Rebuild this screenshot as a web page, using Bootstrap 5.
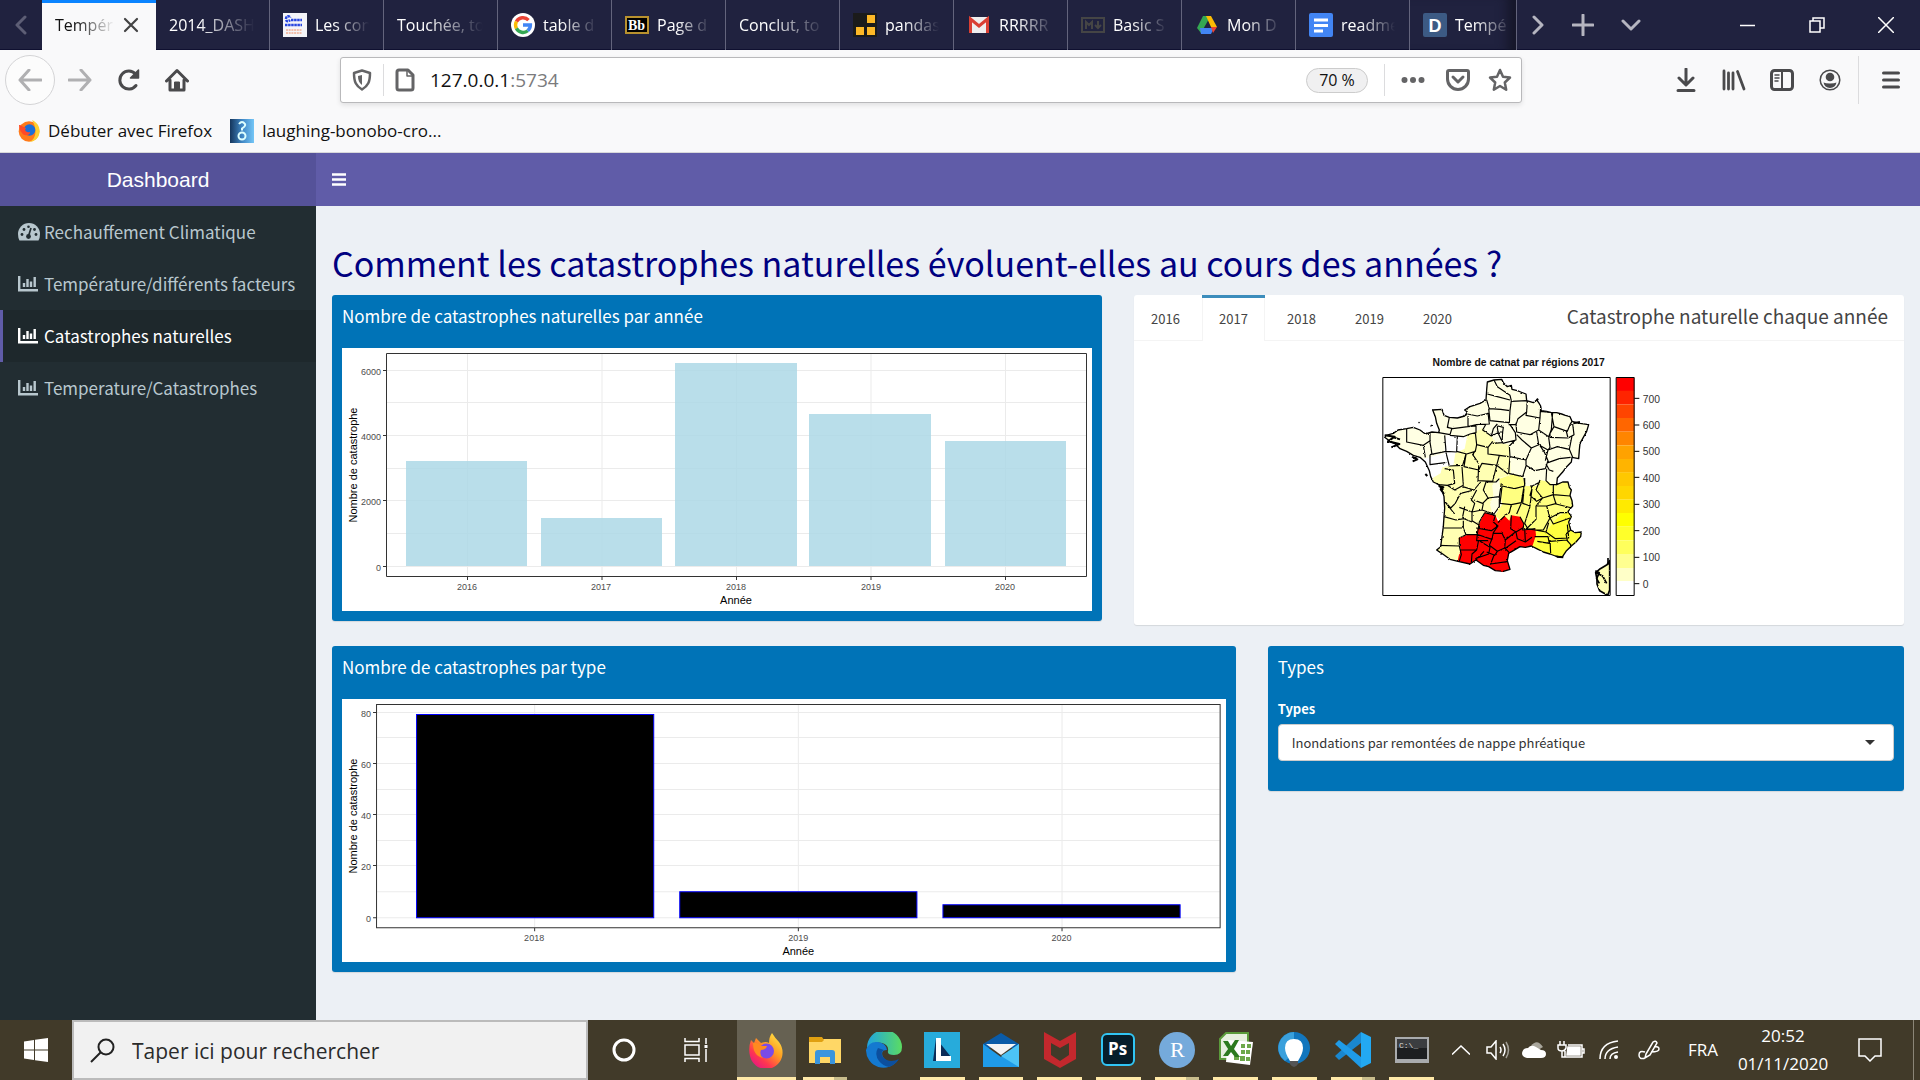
<!DOCTYPE html>
<html lang="fr">
<head>
<meta charset="utf-8">
<meta name="viewport" content="width=device-width, initial-scale=1">
<title>Températures et catastrophes</title>
<link href="https://cdn.jsdelivr.net/npm/bootstrap@5.3.0/dist/css/bootstrap.min.css" rel="stylesheet">
<style>
:root{--ui:"Open Sans","Noto Sans",sans-serif;--page:"Noto Sans CJK SC","Open Sans",sans-serif;--plot:"Liberation Sans",Arial,sans-serif}
body{font-family:var(--ui);font-size:17px;line-height:24px;color:#111;background:#ecf0f5;overflow:hidden}
button{border:0;background:none;padding:0;color:inherit;font:inherit}
a{text-decoration:none;color:inherit}
svg{display:block;flex:none}
.ln{fill:none;stroke:currentColor;stroke-width:3;stroke-linecap:round;stroke-linejoin:round}
.thin{fill:none;stroke:currentColor;stroke-width:1.5}
.slot{display:flex;align-items:center;justify-content:center;flex:none}
/* tabs */
.tabstrip{height:50px;background:#20223f;color:#fff;box-shadow:inset 0 -1px #0f1030;font-size:16px}
.w42{width:42px}.w48{width:48px}.w50{width:50px}.w70{width:69px}
.btab{width:114px;height:50px;padding:0 14px 0 13px;gap:8px;border-right:1px solid #63647c;min-width:0;display:flex;align-items:center;flex:0 1 114px}
.btab.current{background:#f9f9fa;color:#111;border-top:3px solid #0a84ff;border-right:0;padding:0 17px 3px 13px}
.btab.last-tab{flex-basis:107px;padding-right:5px;box-shadow:inset -16px 0 12px -8px #151628}
.fade-txt{flex:1;overflow:hidden;white-space:nowrap;min-width:0;-webkit-mask-image:linear-gradient(90deg,#000 35%,transparent 100%);mask-image:linear-gradient(90deg,#000 35%,transparent 100%)}
/* toolbar */
.toolbar{background:#f9f9fa;height:60px;color:#4a4a4c;padding:0 5px}
.backring{width:50px;height:50px;border:1px solid #d4d4d6;border-radius:50%;color:#b0b0b2;background:#fcfcfc}
.urlbar{height:46px;margin:0 140px 0 139px;background:#fff;border:1px solid #b9b9bb;border-radius:3px;box-shadow:0 2px 5px rgba(0,0,0,.1);color:#646466}
.addr{font-size:19px;color:#111;white-space:nowrap}
.addr span{color:#7b7b7d}
.vr1{width:1px;align-self:stretch;background:#dcdcde;margin:6px 0}
.zoompill{height:25px;border:1px solid #ccc;border-radius:13px;background:#f0f0f1;color:#111;font-size:16px;line-height:22px;width:62px}
.bookmarks{height:43px;background:#f9f9fa;border-bottom:1px solid #d8d8da;padding:0 18px 0;gap:18px}
.bookmarks a{gap:8px;display:flex;align-items:center}
/* dashboard */
.dash{flex:1;min-height:0;display:grid;grid-template-columns:316px 1fr;grid-template-rows:53px 1fr;font-family:var(--page)}
.brand{background:#555299;color:#fff;font:21px/53px var(--plot);text-align:center}
.topnav{background:#605ca8;color:#fff}
.side{background:#222d32;color:#b8c7ce;font-size:17px}
.side a{height:52px;padding-left:15px;border-left:3px solid transparent;gap:4px;display:flex;align-items:center}
.side a svg + span{margin-left:2px}
.side a.on{background:#1e282c;color:#fff;border-color:#605ca8}
.headline{font-size:34px;line-height:42px;font-weight:400;color:navy;margin:36px 16px 11px}
.panel{border-radius:3px;box-shadow:0 1px 1px rgba(0,0,0,.1)}
.blue{background:#0073b7;color:#fff;padding:10px}
.blue h2{font-size:17px;line-height:22px;font-weight:400;margin:0 0 21px}
.blue svg{width:100%;height:auto;background:#fff}
.plots text{font-family:var(--plot);font-size:9px;fill:#4d4d4d}
.plots .ttl{font-size:11px;fill:#000}
.row-gap{margin-bottom:21px}
.yeartabs{height:46px;border-bottom:1px solid #f4f4f4;font-size:13px;color:#444}
.yeartabs button{width:63px;margin-right:5px;height:46px;border-top:3px solid transparent}
.yeartabs button.on{border-top-color:#3c8dbc;background:#fff;box-shadow:inset 1px 0 #f4f4f4,inset -1px 0 #f4f4f4}
.yeartabs h2{font-size:19px;line-height:24px;font-weight:400;margin:0 16px 0 auto;padding-bottom:4px}
.mapbox{padding:9px 0 15px}
.mapbox svg{margin:auto}
.mapbox text{font-family:var(--plot);font-size:31px;fill:#333}
.types label{font-size:13px;line-height:20px;font-weight:700;display:block;margin:1px 0 5px}
.types select{height:37px;font-size:13px;color:#333;border:1px solid #ccc;border-radius:4px;padding:0 40px 0 13px;background:#fff url("data:image/svg+xml,%3Csvg xmlns='http://www.w3.org/2000/svg' width='10' height='5'%3E%3Cpath d='M0 0h10L5 5z' fill='%23333'/%3E%3C/svg%3E") no-repeat right 18px center}
.types{padding-bottom:30px}
/* taskbar */
.taskbar{height:60px;background:#413a29;color:#fff;flex:none}
.w72{width:72px}
.search{width:516px;height:60px;border:2px solid #bbb;background:#f1f1f1;color:#222;gap:17px;padding-left:16px}
.search input{border:0;outline:0;background:none;font-size:21px;width:400px;color:#222;padding:2px 0 0}
.search input::placeholder{color:#2b2b2b;opacity:1}
.apps{width:704px;margin-left:5px}
.apps button{flex:1;height:60px;display:flex;align-items:center;justify-content:center;position:relative}
.apps .run::after{content:"";position:absolute;left:7px;right:7px;bottom:0;height:3px;background:#ffe9a8}
.apps .multi::after{background:linear-gradient(90deg,#ffe9a8 70%,#c9bd8c 70%)}
.apps .front{background:#666152}.apps .front::after{left:0;right:0}
.tray{font-size:17px}
.clock{font-size:17px;line-height:28px;width:124px;text-align:center}
.edgeline{border-left:1px solid #8b8677;width:7px;height:60px;margin-left:18px}
.w36{width:36px}
</style>
<script src="https://cdn.jsdelivr.net/npm/bootstrap@5.3.0/dist/js/bootstrap.bundle.min.js"></script>
</head>
<body class="d-flex flex-column vh-100">

<nav class="tabstrip d-flex align-items-center" aria-label="Onglets">
  <button class="slot w42" aria-label="Défiler à gauche"><svg width="12" height="20" viewBox="0 0 12 20" class="ln" color="#5d5e75"><path d="M10 2 2 10l8 8"/></svg></button>
  <a href="#" class="btab current"><span class="fade-txt">Tempér</span><svg width="16" height="16" viewBox="0 0 16 16" class="ln" color="#444"><path d="M2 2l12 12M14 2 2 14" stroke-width="2.200"/></svg></a>
  <a href="#" class="btab"><span class="fade-txt">2014_DASH</span></a>
  <a href="#" class="btab"><svg width="24" height="24" viewBox="0 0 24 24"><path fill="#f4f4f8" d="M0 0h24v24H0z"/><path d="M3 6c0-4 4-3 4-1M3 7c1 2 3 1 4 0M8 7h11M2 12h17" stroke="#2846e0" stroke-width="2.5" stroke-dasharray="2.5 .6" fill="none"/><path d="M3 17h16M3 20h16" stroke="#f08a60" stroke-dasharray="2 .7"/></svg><span class="fade-txt">Les con</span></a>
  <a href="#" class="btab"><span class="fade-txt">Touchée, to</span></a>
  <a href="#" class="btab"><svg width="24" height="24" viewBox="0 0 24 24"><circle cx="12" cy="12" r="12" fill="#fff"/><g fill="none" stroke-width="3.4"><path d="M17.5 7.2A7.5 7.5 0 0 0 5.4 8.6" stroke="#ea4335"/><path d="M5.4 8.6a7.5 7.5 0 0 0 0 6.8" stroke="#fbbc05"/><path d="M5.4 15.4a7.5 7.5 0 0 0 11.4 2.3" stroke="#34a853"/><path d="M16.8 17.7A7.5 7.5 0 0 0 19.4 12H12" stroke="#4285f4"/></g></svg><span class="fade-txt">table d</span></a>
  <a href="#" class="btab"><svg width="24" height="18" viewBox="0 0 24 18"><path d="M1 1h22v16H1z" fill="#000" stroke="#b8912e" stroke-width="2"/><text x="3" y="14" font-family="Liberation Serif" font-weight="700" font-size="14" fill="#fff">Bb</text></svg><span class="fade-txt">Page d</span></a>
  <a href="#" class="btab"><span class="fade-txt">Conclut, to</span></a>
  <a href="#" class="btab"><svg width="24" height="24" viewBox="0 0 24 24"><path fill="#1b1b1b" d="M0 0h24v24H0z"/><path fill="#fdb827" d="M14 2h8v8h-8zM3 14h8v8H3zM14 14h8v8h-8z"/></svg><span class="fade-txt">pandas</span></a>
  <a href="#" class="btab"><svg width="24" height="24" viewBox="0 0 24 24"><path fill="#eee" d="M2 4h20v16H2z"/><path d="M3.500 20V6L12 13l8.500-7v14" fill="none" stroke="#d93f33" stroke-width="3"/></svg><span class="fade-txt">RRRRR</span></a>
  <a href="#" class="btab"><svg width="24" height="16" viewBox="0 0 24 16" fill="none" stroke="#454545" stroke-width="2"><path d="M1 1h22v14H1z"/><path d="M5 12V5l3 3 3-3v7M17 4v7m-3-3 3 3 3-3"/></svg><span class="fade-txt">Basic S</span></a>
  <a href="#" class="btab"><svg width="24" height="24" viewBox="0 0 24 24"><path fill="#34a853" d="M8 3h4l3 1-9 16-4-5z"/><path fill="#fbbc04" d="M11 3h5l6 11h-6z"/><path fill="#4285f4" d="M5 15h14l-3 6H6z"/><path fill="#ea4335" d="M16 14h6l-4 6z"/></svg><span class="fade-txt">Mon D</span></a>
  <a href="#" class="btab"><svg width="24" height="24" viewBox="0 0 24 24"><rect width="24" height="24" rx="2" fill="#4285f4"/><path d="M5 7h14M5 12.500h14M5 18h9" stroke="#fff" stroke-width="3"/></svg><span class="fade-txt">readme</span></a>
  <a href="#" class="btab last-tab"><svg width="24" height="24" viewBox="0 0 24 24"><rect width="24" height="24" rx="2" fill="#3c5a84"/><text x="5.500" y="18.500" font-family="Liberation Sans" font-weight="700" font-size="18" fill="#fff">D</text></svg><span class="fade-txt">Tempé</span></a>
  <button class="slot w42" aria-label="Défiler à droite"><svg width="12" height="20" viewBox="0 0 12 20" class="ln" color="#b5b5c0"><path d="M2 2l8 8-8 8"/></svg></button>
  <button class="slot w48" aria-label="Nouvel onglet"><svg width="22" height="22" viewBox="0 0 22 22" class="ln" color="#b5b5c0"><path d="M11 1v20M1 11h20"/></svg></button>
  <button class="slot w48" aria-label="Liste des onglets"><svg width="20" height="12" viewBox="0 0 20 12" class="ln" color="#b5b5c0"><path d="m2 2 8 8 8-8"/></svg></button>
  <div class="d-flex ms-auto">
    <button class="slot w70" aria-label="Réduire"><svg width="15" height="15" viewBox="0 0 15 15" class="thin"><path d="M0 7.500h15"/></svg></button>
    <button class="slot w70" aria-label="Restaurer"><svg width="16" height="16" viewBox="0 0 16 16" class="thin"><path d="M1 4h10v11H1zM4 4V1h11v10h-4"/></svg></button>
    <button class="slot w70" aria-label="Fermer"><svg width="16" height="16" viewBox="0 0 16 16" class="thin"><path d="m0 0 16 16M16 0 0 16"/></svg></button>
  </div>
</nav>

<div class="toolbar d-flex align-items-center">
  <button class="slot backring" aria-label="Retour"><svg width="24" height="22" viewBox="0 0 24 22" class="ln"><path d="M23 11H2M11 1 2 11l9 10"/></svg></button>
  <button class="slot w50" aria-label="Suivant"><svg width="24" height="22" viewBox="0 0 24 22" class="ln" color="#b0b0b2"><path d="M1 11h21M13 1l9 10-9 10"/></svg></button>
  <button class="slot w48" aria-label="Actualiser"><svg width="24" height="24" viewBox="0 0 24 24" class="ln"><path d="M19 17.500A9 9 0 1 1 18.500 6"/><path d="M21.500 2v8h-8z" fill="currentColor" stroke-width="1.500"/></svg></button>
  <button class="slot w48" aria-label="Accueil"><svg width="24" height="24" viewBox="0 0 24 24" class="ln"><path d="M1.500 13 12 2.500 22.500 13M5 12v10h14V12"/><path d="M9.500 21v-7h5v7z" fill="currentColor" stroke-width="1"/></svg></button>
  <div class="urlbar d-flex align-items-center flex-fill">
    <span class="slot w42"><svg width="20" height="22" viewBox="0 0 20 22" class="ln"><path d="M10 1.500 18 4c0 9-2 13-8 16.500C4 17 2 13 2 4z" stroke-width="2.500"/><path d="M10 6v10c-3-2-4-5-4-9z" fill="currentColor" stroke="none"/></svg></span>
    <span class="vr1"></span>
    <span class="slot w42"><svg width="20" height="24" viewBox="0 0 20 24" class="ln"><path d="M2 4q0-2 2-2h9l5 5v13q0 2-2 2H4q-2 0-2-2z"/><path d="M12 2v6h6" stroke-width="1.500"/></svg></span>
    <div class="addr ms-1" role="textbox" aria-label="Adresse">127.0.0.1<span>:5734</span></div>
    <button class="zoompill ms-auto me-3">70 %</button>
    <span class="vr1"></span>
    <span class="slot w48 ms-1"><svg width="24" height="8" viewBox="0 0 24 8" fill="currentColor"><circle cx="3.500" cy="4" r="3"/><circle cx="12" cy="4" r="3"/><circle cx="20.500" cy="4" r="3"/></svg></span>
    <span class="slot w42"><svg width="24" height="22" viewBox="0 0 24 22" class="ln"><path d="M3 1.500h18q1.500 0 1.500 1.500v7a10.500 10.500 0 0 1-21 0V3q0-1.500 1.500-1.500z"/><path d="m7 8 5 5 5-5"/></svg></span>
    <span class="slot w42"><svg width="24" height="24" viewBox="0 0 24 24" class="ln"><path d="m12 2 3 6.700 7 .8-5.200 5 1.400 7.200L12 18l-6.200 3.700 1.400-7.200-5.200-5 7-.8z" stroke-width="2.500"/></svg></span>
  </div>
  <button class="slot w48" aria-label="Téléchargements"><svg width="20" height="24" viewBox="0 0 20 24" class="ln"><path d="M10 1v15M3 10l7 7 7-7M2 22.500h16" /></svg></button>
  <button class="slot w48" aria-label="Bibliothèque"><svg width="24" height="22" viewBox="0 0 24 22" class="ln"><path d="M2 2v18M6.500 4v16M11 4v16M15.500 2.500 22 20" stroke-width="2.800"/></svg></button>
  <button class="slot w48" aria-label="Panneaux"><svg width="24" height="22" viewBox="0 0 24 22" class="ln"><rect x="1.500" y="1.500" width="21" height="19" rx="3"/><path d="M12 2v18" stroke-width="2"/><path d="M5 6h4M5 9h4M5 12h3" stroke-width="1.500"/></svg></button>
  <button class="slot w48" aria-label="Compte"><svg width="22" height="22" viewBox="0 0 22 22"><circle cx="11" cy="11" r="9.800" class="thin"/><circle cx="11" cy="8" r="4.300" fill="currentColor"/><path d="M4.500 13.500q2 1 6.500 1t6.500-1q-1 5-6.500 5.500-5.500-.5-6.500-5.500z" fill="currentColor"/></svg></button>
  <span class="vr1 ms-1"></span>
  <button class="slot w48 ms-2" aria-label="Menu"><svg width="18" height="18" viewBox="0 0 18 18" class="ln"><path d="M1.500 2h15M1.500 9h15M1.500 16h15"/></svg></button>
</div>

<div class="bookmarks d-flex align-items-center">
  <a href="#"><svg width="22" height="22" viewBox="0 0 22 22"><circle cx="11" cy="11.500" r="10.300" fill="#ff7a1a"/><path d="M14 0c6 3 8 7 7.500 13A10.500 10.500 0 0 1 11 22c8-3 8-14 3-22z" fill="#ffd02e"/><circle cx="11.500" cy="10" r="5.800" fill="#1b6fd8"/><path d="M1 5c3 0 3 2 7 3-2 2 0 5 4 4 1 3-6 5-8 1-2-2-3-5-3-8z" fill="#ff4a28"/></svg>Débuter avec Firefox</a>
  <a href="#"><svg width="24" height="24" viewBox="0 0 24 24"><defs><linearGradient id="bq"><stop stop-color="#15365c"/><stop offset=".5" stop-color="#3f86c4"/><stop offset="1" stop-color="#74c6f7"/></linearGradient></defs><path fill="url(#bq)" d="M0 0h24v24H0z"/><path d="M9 5q3-4 6 0 1 2-3 4.500v2" fill="none" stroke="#dff" stroke-width="2"/><circle cx="12" cy="17" r="3.500" fill="none" stroke="#dff" stroke-width="2"/></svg>laughing-bonobo-cro...</a>
</div>

<div class="dash">
  <div class="brand">Dashboard</div>
  <header class="topnav d-flex align-items-center"><button class="ms-3" aria-label="Basculer le menu"><svg width="14" height="13" viewBox="0 0 14 13" stroke="#fff" stroke-width="2.400"><path d="M0 1.500h14M0 6.500h14M0 11.500h14"/></svg></button></header>
  <nav class="side">
    <a href="#"><svg width="22" height="18" viewBox="0 0 22 18"><path d="M11 0a11 11 0 0 1 11 11q0 4-1.500 6.500h-19Q0 15 0 11A11 11 0 0 1 11 0z" fill="#b8c7ce"/><g fill="#222d32"><circle cx="4" cy="11.500" r="1.400"/><circle cx="6" cy="6.500" r="1.400"/><circle cx="18" cy="11.500" r="1.400"/><circle cx="16.500" cy="6.500" r="1.400"/><circle cx="10.500" cy="3.700" r="1.300"/><circle cx="10.500" cy="13.500" r="2.400"/></g><path d="M10.500 13 13 5" stroke="#222d32" stroke-width="1.700"/></svg>Rechauffement Climatique</a>
    <a href="#"><svg width="20" height="16" viewBox="0 0 20 16" fill="none" stroke="currentColor" stroke-width="2.400"><path d="M1.200 0v14.200H20M6 11V7M9.500 11V3M13 11V5.500M16.700 11V1"/></svg><span>Température/différents facteurs</span></a>
    <a href="#" class="on"><svg width="20" height="16" viewBox="0 0 20 16" fill="none" stroke="currentColor" stroke-width="2.400"><path d="M1.200 0v14.200H20M6 11V7M9.500 11V3M13 11V5.500M16.700 11V1"/></svg><span>Catastrophes naturelles</span></a>
    <a href="#"><svg width="20" height="16" viewBox="0 0 20 16" fill="none" stroke="currentColor" stroke-width="2.400"><path d="M1.200 0v14.200H20M6 11V7M9.500 11V3M13 11V5.500M16.700 11V1"/></svg><span>Temperature/Catastrophes</span></a>
  </nav>
  <main class="overflow-hidden">
    <h1 class="headline">Comment les catastrophes naturelles évoluent-elles au cours des années ?</h1>
    <div class="row g-0 row-gap">
      <div class="col-6 px-3">
        <section class="panel blue">
          <h2>Nombre de catastrophes naturelles par année</h2>
          <svg class="plots" viewBox="0 0 750 263" role="img" aria-label="Catastrophes par année">
            <path d="M44 22.500h700M44 54.500h700M44 87.500h700M44 120.500h700M44 152.500h700M44 185.500h700M44 218.500h700M125.500 6v222M260 6v222M394.500 6v222M529 6v222M663.500 6v222" stroke="#ebebeb" fill="none"/>
            <g fill="#add8e6" fill-opacity=".85"><path d="M64 113h121v105H64zM199 170h121v48H199zM333 15h122v203H333zM467 66h122v152H467zM603 93h121v125H603z"/></g>
            <path d="M44.500 5.500h700v223h-700zM41 22.500h3M41 87.500h3M41 152.500h3M41 218.500h3M125.500 229v3M260 229v3M394.500 229v3M529 229v3M663.500 229v3" stroke="#333" fill="none"/>
            <g text-anchor="end"><text x="39" y="27">6000</text><text x="39" y="92">4000</text><text x="39" y="157">2000</text><text x="39" y="223">0</text></g>
            <g text-anchor="middle"><text x="125" y="242">2016</text><text x="259" y="242">2017</text><text x="394" y="242">2018</text><text x="529" y="242">2019</text><text x="663" y="242">2020</text><text x="394" y="256" class="ttl">Année</text><text transform="translate(15 117) rotate(-90)" class="ttl">Nombre de catastrophe</text></g>
          </svg>
        </section>
      </div>
      <div class="col-6 px-3">
        <section class="panel bg-white">
          <div class="yeartabs d-flex align-items-center" role="tablist">
            <button role="tab">2016</button><button role="tab" class="on" aria-selected="true">2017</button><button role="tab">2018</button><button role="tab">2019</button><button role="tab">2020</button>
            <h2>Catastrophe naturelle chaque année</h2>
          </div>
          <div class="mapbox">
            <svg width="298" height="260" viewBox="0 0 894 780" role="img" aria-label="Carte des catastrophes par département">
              <defs>
                <filter id="coast" x="0" y="0" width="1" height="1"><feTurbulence type="fractalNoise" baseFrequency=".12" numOctaves="2" seed="4"/><feDisplacementMap in="SourceGraphic" scale="6" xChannelSelector="R" yChannelSelector="G"/></filter>
                <clipPath id="fr"><path id="frp" d="M352 96l20-6 23-2 5 10 12 12 12-4 2 12 16 4 10 4 16 6 2 20 20 6 10-8 6 8 6 10 2 14 16 2 15 4h15l15 4 11 4 14 4 6 14 24 6 26 4-6 20-10 18-10 18-2 20-2 26-20-4-2 14-14 14-12 16-16 18-2 20 18-8h16l4 16 6 8-4 16 6 16 2 16-14 16 10 16-8 16 6 24 14 8 18-2-2 14-14 16-14 12-16 16-12 18-20-4-16-6-20-6-20-10-16-8-18 4-16-2-20 12-14 8-4 22 8 26-20 6-24-2-20-12-16-4-22-16-18 12-36-8-24-6-25-18-15-10 12-10 4-30 4-30 2-30 2-25-2-35-6-20-10-16-16-8-8-16-4-18-12-26-16-14-20-6-20-12-20-8-14-14-16-8-16-12 4-6 22-6 14-10 26-4 20-4 20 8 16 12 20-6 20 2 2-8-8-20-4-20-8-20 28-2 6 18 16 6 24 2 22-6 8-12-8-6 16-10 30-10 18-10 2-30z"/></clipPath>
              </defs>
              <text x="446" y="48" text-anchor="middle" font-weight="700" style="fill:#111;font-size:31px">Nombre de catnat par régions 2017</text>
              <g filter="url(#coast)" stroke-linejoin="round">
                <g clip-path="url(#fr)">
                  <path fill="#ffffe3" d="M30 80h640v600H30z"/>
                  <path fill="#fff" d="M150 330L222 310 228 256 262 258 296 262 316 282 314 300 284 320 276 350 246 358 244 396 222 404 180 400z"/>
                  <path fill="#ffffb3" d="M316 246l20-12 28 24 10 18 42 8 4 30 2 60-36 10-20 20 4 30-10 30 8 30-30 30-20 60-60 50-70 30-20-100 20-120 0-60 24-14 4-18 34-6 6-36 28-14 8-40z"/>
                  <path fill="#ffffb3" d="M180 560L280 540 272 600 262 650 190 620z"/>
                  <path fill="#ffff80" d="M388 386l42-14 30 12 4 24 36 0 10-18 28 6 12 14 20-24 60 0 20 80-40 50-50 30-40 0-28 36-60-20-50-60-12 2 26-40-4-36z"/>
                  <path fill="#ffff40" d="M548 520l20-22 36-18 10 30 30 40-20 60-60 30-100-34 20-40 16-30 30 8z"/>
                  <path fill="#f00" d="M344 488L376 496 384 514 404 498 418 512 424 496 450 500 462 522 460 540 496 536 498 556 486 592 466 596 430 610 418 624 430 664 400 674 356 666 318 640 300 654 260 648 266 618 272 600 266 564 300 552 322 552 322 538 330 516z"/>
                  <g fill="none" stroke="#000" stroke-width="3.500">
                    <path d="M372 90l10 20 38 26 4 16M352 132l30 8 38 10M350 150l8 26 34 2 28 4 4-30M420 182l-2 36-58-6-4-36M292 192l30 6 34-8M424 154l48-2-2 34-26 20-6 18-22 0M470 186l-2 10 42 8 2-36M510 204l-4 36-26 14-40-8-2-28M512 184l36 4-4 50-8 22-30-20M544 188l8 42 40 14 8-20 6-10M552 230l-12 20 0 12 54 2-6-24M594 264l18-10-4-32M606 258l-8 40 10 24M598 298l-36-8-28 10-8 32M536 262l4 30-6 8-28-16-22 10-28-24-16-16M500 246l6 38M416 218l20 30 2 22-40 10M436 270l-18 18 2 32 48 10 16-36M420 320l-4 50 42 10M468 330l0 16 26 16 32-6 8-24-10-24-16-24M458 380l10-32M464 402l-2-18M530 356l-2 36 12 12 20 0M534 338l34-12 34-4M528 342l10 18 12 4"/>
                    <path d="M238 202l-6 30 16 4 46-6 0-32M206 248l34 6 6-20M240 256l40 4 20-8 18-4 0-20-24 2M294 230l26-6 38-2-4-34M348 222l-10 18 26 18 20-10 14 30-30 2M364 258l6-22 12-14M384 228l16 4-2 14-14 0-2-14zM398 246l-2 34M316 248l4 36 34 8 14-18M354 292l0 20 34 4 28 4M388 316l-8 30 34 26M224 256l4 48-48 10M180 250l0 26 6 38M110 236l0 40 50 10 20-14M160 286l6 36M262 260l-2 44 30 8 26-8 4-20M228 304l32 2M228 308l10 40 40-2 10-34M180 314l0 30 46-6M224 356l26 4 4 40-22 6-26-2M288 314l-6 36 44 10 10-20 44 6M316 302l-8 12 18 26M326 346l-2 46 44 2 12-48M276 350l4 56-26 14-22-14M278 410l34 10 20-24M388 386l-10 10-30 0-8 24 14 24 34-4 6-40M312 420l-40 10-16 30-14 14-22-24M320 420l-16 30 10 10-8 26-38-14M354 444l-16 16-26-10M340 460l-4 20-30 6 0 26 22 14M388 440l0 30-16 22-36-12M222 500l36 10 24-4 24 10M284 470l-6 30M222 534l58 0 0-22M280 534l8 20 34 0M288 554l-20 10 0 24-62-2M268 588l6 26-10 32M222 452l32 40"/>
                    <path d="M464 384l0 24-30 8-38-8M396 410l-6 50 34 4 30-6 8-50M462 416l-4 44 22 8 6-52-4-10M482 410l28-14M510 390l-12 30 20 24 32-10 0-30M486 416l-6 20 20 18 18-10M550 434l50 4M550 436l8 26 48 12M518 444l-20 24 0 40-26 26-8-14 16-50M500 468l30 0 30-8M530 468l10 36-20 36-24 0-28-4M540 504l30-16 22 0M424 464l-6 24-14 8M454 460l-14 32M540 504l10 18 50-18M536 518l-8 28 28 20 40-2-4-40M528 546l-34-6M494 560l40 0 4 20-36-6M540 570l2 40M540 574l50-4 14 16M602 540l-14 12 4 20"/>
                    <path d="M344 488L376 496M376 496l-6 20 14 12-20 14-46-8M384 528l-14 20-4 20-48-16M404 498l-20 20M424 496l-2 40 16 10 20-12M450 500l12 22-4 18 38-4M436 546l-30 24-10-20-26 0M406 570l-2 24-22 10-24-18 8-20M322 552l-2 20 36 0M344 488l-16 28-6 36M326 570l-6 30-50 0M330 574l30 18-4 20-40 14M320 600l-14 12-2 26M404 594l14 14M438 546l4 20 24 10 20-14M404 596l34-24M382 604l-8 12-24-10M372 616l-10 26 54-8M318 630l24-26M464 534l2 40"/>
                  </g>
                </g>
                <use href="#frp" fill="none" stroke="#000" stroke-width="4"/>
                <path d="M44 256l30 4-20 14 34 8-24 10M70 262l20 6M126 320l16 8-14 6M166 372l6 6M206 408l14 4-8 6 10 14M500 152l4-6M610 220l20-4M560 620l20 2M146 216l3 2M182 226l3 2" fill="none" stroke="#000" stroke-width="6"/>
                <path d="M719 632l-8 12-20 12-14 12 4 20 0 14 8 20 24 14 6-16z" fill="#ffffb3" stroke="#000" stroke-width="5"/><path d="M714 624v20M678 668l20 10 12 22M676 662l12 6-8 18 8 14" fill="none" stroke="#000" stroke-width="5"/>
              </g>
              <path d="M38.500 82.500h682v654h-682z" fill="none" stroke="#000" stroke-width="3"/>
              <g>
                <path fill="#f00" d="M739 82h54v41h-54z"/><path fill="#ff2400" d="M739 122h54v41h-54z"/><path fill="#ff4500" d="M739 163h54v41h-54z"/><path fill="#ff6600" d="M739 204h54v41h-54z"/><path fill="#ff8500" d="M739 245h54v41h-54z"/><path fill="#ffa200" d="M739 286h54v41h-54z"/><path fill="#ffb400" d="M739 327h54v41h-54z"/><path fill="#ffc800" d="M739 367h54v41h-54z"/><path fill="#ffd600" d="M739 408h54v41h-54z"/><path fill="#ffea00" d="M739 449h54v41h-54z"/><path fill="#ff0" d="M739 489h54v41h-54z"/><path fill="#ffff2a" d="M739 530h54v41h-54z"/><path fill="#ffff5c" d="M739 571h54v41h-54z"/><path fill="#ffff90" d="M739 612h54v42h-54z"/><path fill="#ffffc8" d="M739 654h54v40h-54z"/><path fill="#fff" d="M739 693h54v43h-54z"/>
              </g>
              <path d="M738.500 82.500h54v654h-54zM793 145h15M793 225h15M793 304h15M793 382h15M793 463h15M793 542h15M793 622h15M793 701h15" fill="none" stroke="#000" stroke-width="3"/>
              <text x="818" y="158">700</text><text x="818" y="237">600</text><text x="818" y="316">500</text><text x="818" y="395">400</text><text x="818" y="475">300</text><text x="818" y="554">200</text><text x="818" y="634">100</text><text x="818" y="713">0</text>
            </svg>
          </div>
        </section>
      </div>
    </div>
    <div class="row g-0">
      <div class="col-7 px-3">
        <section class="panel blue">
          <h2>Nombre de catastrophes par type</h2>
          <svg class="plots" viewBox="0 0 883 263" role="img" aria-label="Catastrophes par type">
            <path d="M35 13.500h842M35 38.500h842M35 64.500h842M35 90.500h842M35 115.500h842M35 141.500h842M35 166.500h842M35 192.500h842M35 218.500h842M192.500 6v222M456 6v222M719.500 6v222" stroke="#ebebeb" fill="none"/>
            <path d="M74.500 15.500h237v203h-237zM337.500 192.500h237v26h-237zM600.500 205.500h237v13h-237z" fill="#000" stroke="#00f"/>
            <path d="M34.500 5.500h843v223h-843zM31 13.500h3M31 64.500h3M31 115.500h3M31 166.500h3M31 218.500h3M192.500 229v3M456 229v3M719.500 229v3" stroke="#333" fill="none"/>
            <g text-anchor="end"><text x="29" y="18">80</text><text x="29" y="69">60</text><text x="29" y="120">40</text><text x="29" y="171">20</text><text x="29" y="223">0</text></g>
            <g text-anchor="middle"><text x="192" y="242">2018</text><text x="456" y="242">2019</text><text x="719" y="242">2020</text><text x="456" y="256" class="ttl">Année</text><text transform="translate(15 117) rotate(-90)" class="ttl">Nombre de catastrophe</text></g>
          </svg>
        </section>
      </div>
      <div class="col-5 px-3">
        <section class="panel blue types">
          <h2>Types</h2>
          <label for="typ">Types</label>
          <select id="typ" class="form-select"><option>Inondations par remontées de nappe phréatique</option></select>
        </section>
      </div>
    </div>
  </main>
</div>

<footer class="taskbar d-flex align-items-center">
  <button class="slot w72" aria-label="Démarrer"><svg width="24" height="24" viewBox="0 0 24 24" fill="#fff"><path d="M0 3.500l10-1.500v9.500H0zM11 1.800 24 0v11.500H11zM0 12.500h10V22L0 20.500zM11 12.500h13V24l-13-1.800z"/></svg></button>
  <div class="search d-flex align-items-center"><svg width="25" height="25" viewBox="0 0 25 25" class="thin" style="stroke-width:2"><circle cx="16" cy="9" r="7.500"/><path d="M10.500 14.500 1 24"/></svg><input type="text" aria-label="Rechercher" placeholder="Taper ici pour rechercher"></div>
  <button class="slot w72" aria-label="Cortana"><svg width="24" height="24" viewBox="0 0 24 24"><circle cx="12" cy="12" r="10" fill="none" stroke="#fff" stroke-width="3"/></svg></button>
  <button class="slot w72" aria-label="Vue des tâches"><svg width="24" height="24" viewBox="0 0 24 24" class="thin"><path d="M1 7h14v10H1zM1 0v3.500h14V0M1 24v-3.500h14V24M22 0v6M22 11v13"/><path d="M20.500 7h3v3h-3z" fill="#fff" stroke="none"/></svg></button>
  <div class="apps d-flex">
    <button class="run front" aria-label="Firefox"><svg width="36" height="36" viewBox="0 0 36 36"><defs><linearGradient id="fx" x1="1" y1="0" x2=".2" y2="1"><stop stop-color="#fff44f"/><stop offset=".45" stop-color="#ff9a1f"/><stop offset=".75" stop-color="#ff3650"/><stop offset="1" stop-color="#e31587"/></linearGradient></defs><path d="M3 8l3 3 2-5 5 5q5-2 8 0 0-6 3-10 3 5 7 9 5 7 3 15a16.500 16.500 0 0 1-32-1Q0 16 3 8z" fill="url(#fx)"/><circle cx="18.500" cy="19" r="7.500" fill="#7a4be8"/><path d="M5 11q5-1 8 3h6q-1 4-6 4-2 5 2 8-10-2-10-15z" fill="#ff8a1f"/></svg></button>
    <button class="run multi" aria-label="Explorateur"><svg width="34" height="30" viewBox="0 0 34 30"><path d="M1 2h12l3 4H1z" fill="#e0a011"/><path d="M1 4h32v24H1z" fill="#ffd766"/><path d="M1 2h13l2 3-2 2H1z" fill="#e0a011"/><path d="M7 29V18q0-3 3-3h14q3 0 3 3v11h-5v-7H12v7z" fill="#3a95de"/></svg></button>
    <button aria-label="Edge"><svg width="36" height="36" viewBox="0 0 36 36"><defs><linearGradient id="ed"><stop stop-color="#1fa4e0"/><stop offset="1" stop-color="#5bdc62"/></linearGradient></defs><path d="M1 16A17.500 17.500 0 0 1 36 15q0 8-8 8-7 0-6-4 1-6-6-8Q8 9 1 16z" fill="url(#ed)"/><path d="M0 18Q3 9 12 10q8 1 9 8-7 0-4 7 5 8 15 3A17.500 17.500 0 0 1 0 18z" fill="#1479d0"/><path d="M12 16q-4 6 1 13 4 5 10 6 6-2 10-8-10 5-16-2-3-5 1-7z" fill="#0c4f9e"/></svg></button>
    <button class="run" aria-label="Lexibar"><svg width="36" height="36" viewBox="0 0 36 36"><path fill="#27abdb" d="M0 0h36v36H0z"/><path d="M12 6 9 29h15l3-4z" fill="#0b2c58"/><path d="M12 6h5v18h10v5H12z" fill="#fff"/></svg></button>
    <button class="run" aria-label="Courrier"><svg width="36" height="34" viewBox="0 0 36 34"><path d="M0 11 18 0l18 11v4H0z" fill="#0a5ba8"/><path d="M0 11l18 13 18-13v23H0z" fill="#1f9be8"/><path d="M18 23 36 11v23z" fill="#4cc3f5"/><path d="M3 11h30L18 22z" fill="#f4f4f4"/></svg></button>
    <button class="run" aria-label="McAfee"><svg width="32" height="36" viewBox="0 0 32 36"><path d="M0 0l16 9L32 0v27l-16 9-16-9zM7 11v12l9 6 9-6V11l-9 5z" fill="#c4282d" fill-rule="evenodd"/></svg></button>
    <button class="run" aria-label="Photoshop"><svg width="34" height="34" viewBox="0 0 34 34"><rect x="1" y="1" width="32" height="31" rx="5" fill="#061e2b" stroke="#31c5f4" stroke-width="2"/><text x="7" y="22" font-family="Open Sans" font-weight="700" font-size="17" fill="#fff">Ps</text></svg></button>
    <button class="run multi" aria-label="RStudio"><svg width="36" height="36" viewBox="0 0 36 36"><circle cx="18" cy="18" r="18" fill="#75aadb"/><text x="11" y="25" font-family="Liberation Serif" font-size="22" fill="#fff">R</text></svg></button>
    <button class="run" aria-label="Excel"><svg width="36" height="36" viewBox="0 0 36 36"><path d="M8 1h22v26H2V7z" fill="#e7efdf" stroke="#5b9a3b" stroke-width="2"/><path d="M10 8l25 2-3 23-24-3z" fill="#fff"/><path d="M23 12h4v4h-4zM29 12h4v4h-4zM23 18h4v4h-4zM28 18h4v4h-4zM16 24h5v4h-5zM22 24h5v5h-5zM28 25h4v4h-4z" fill="#6da84a"/><path d="M5 9h5l3 5 4-6h4l-5 9 6 8h-5l-4-5-3 4H5l5-7z" fill="#2c7a1f"/></svg></button>
    <button class="run" aria-label="Astuces"><svg width="32" height="36" viewBox="0 0 32 36"><circle cx="16" cy="16" r="16" fill="#1276bd"/><path d="M16 0a16 16 0 0 0-9 29l9-8z" fill="#3aa0dc"/><path d="M16 7q9 0 9 9 0 5-5 13h-8Q7 21 7 16q0-9 9-9z" fill="#fff"/><path d="M12 29h8v3q-4 6-8 0z" fill="#555"/></svg></button>
    <button class="run multi" aria-label="VS Code"><svg width="36" height="36" viewBox="0 0 36 36"><path d="M26 0l10 5v26l-10 5z" fill="#23a9f2"/><path d="M26 0v11L4 28l-4-4z" fill="#1a87cf"/><path d="M0 12l4-4 22 17v11z" fill="#1f9be8"/></svg></button>
    <button class="run" aria-label="Invite de commandes"><svg width="34" height="26" viewBox="0 0 34 26"><path d="M0 0h34v26H0z" fill="#a9abad"/><path d="M2 2h30v20H2z" fill="#1d1f21"/><path d="M2 2h30v9H2z" fill="#3b3d40"/><text x="4" y="11" font-family="Liberation Mono" font-size="8" fill="#ddd">C:\_</text></svg></button>
  </div>
  <div class="tray d-flex align-items-center ms-auto">
    <button class="slot w36" aria-label="Icônes cachées"><svg width="18" height="10" viewBox="0 0 18 10" class="thin"><path d="m0 9.500 9-8.500 9 8.500"/></svg></button>
    <span class="slot w36"><svg width="36" height="20" viewBox="0 0 36 20" class="thin"><path d="M8 7h4l5-6v18l-5-6H8zM21 7q2 3 0 6M24 4q4 6 0 12"/><path d="M27 2q5 8 0 16" opacity=".5"/></svg></span>
    <span class="slot"><svg width="38" height="18" viewBox="0 0 38 18"><path d="M16 5q6-8 12 1l-10 6z" fill="#a9a69c"/><path d="M12 17q-5-1-5-5 1-5 6-5 3-4 8-1l5 3q5 0 5 4 0 4-5 4z" fill="#fff"/></svg></span>
    <span class="slot"><svg width="36" height="18" viewBox="0 0 36 18" class="thin"><path d="M12 10v6h17V4H15M29 8h2v4h-2M7 0v4m4-4v4M5 4h8v3q-1 3-4 3-4 0-4-3zM9 10v6h3"/><path d="M15 6h12v8H14z" fill="#fff"/></svg></span>
    <span class="slot"><svg width="40" height="20" viewBox="0 0 40 20" class="thin"><path d="M11 19Q11 3 29 1M16 19q0-10 13-12M21 19q0-6 8-7"/><circle cx="27" cy="17" r="2" fill="#fff" stroke="none"/></svg></span>
    <span class="slot"><svg width="40" height="20" viewBox="0 0 40 20" class="thin"><path d="M17 14 24 2q3-2 4 1l-7 12-5 3zM16 12q-6-2-6 3t6 3M22 12q8 0 8-3t-5-2"/></svg></span>
    <button class="ms-3 w36">FRA</button>
    <div class="clock">20:52<br>01/11/2020</div>
    <button class="slot w50" aria-label="Notifications"><svg width="24" height="24" viewBox="0 0 24 24" class="thin"><path d="M1 1h22v17h-6l-5 5-5-5H1z"/></svg></button>
    <span class="edgeline"></span>
  </div>
</footer>
</body>
</html>
